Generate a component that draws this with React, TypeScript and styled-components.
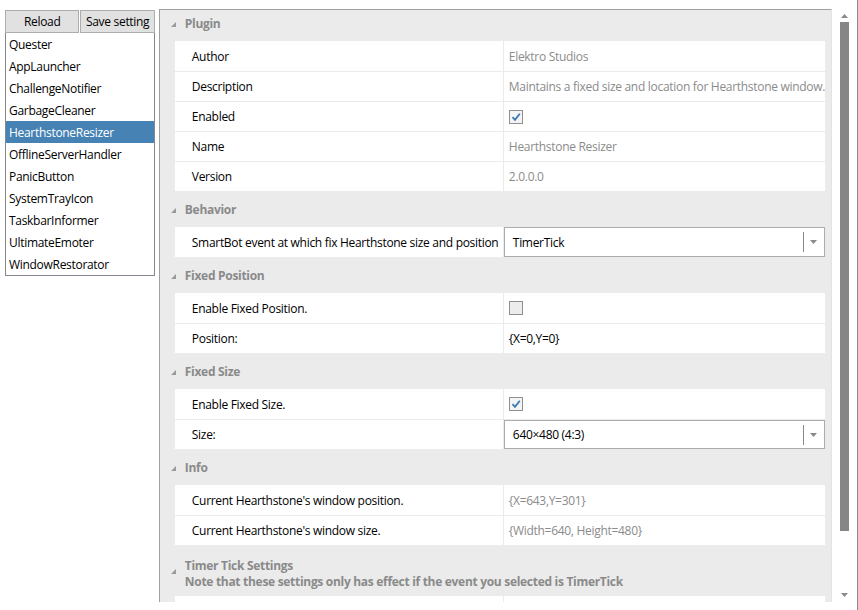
import styled, { createGlobalStyle } from "styled-components";

const GlobalStyle = createGlobalStyle`
  html, body {
    margin: 0;
    padding: 0;
    background: #ffffff;
  }
  body {
    font-family: "Open Sans", "Noto Sans", "Liberation Sans", sans-serif;
    font-size: 12px;
    letter-spacing: -0.3px;
    color: #000000;
  }
`;

const Window = styled.div`
  width: 858px;
  height: 610px;
  box-sizing: border-box;
  border-right: 1px solid #8a8a8a;
  display: flex;
  align-items: flex-start;
  padding: 9px 0 0 5px;
  gap: 4px;
`;

const Sidebar = styled.div`
  width: 150px;
  margin-top: 1px;
  display: flex;
  flex-direction: column;
`;

const ButtonBar = styled.div`
  display: flex;
`;

const Button = styled.button`
  flex: 1;
  height: 23px;
  margin: 0;
  padding: 0;
  font: inherit;
  letter-spacing: inherit;
  color: #000;
  background: #e1e1e1;
  border: 1px solid #adadad;
  & + & {
    margin-left: 1px;
  }
`;

const PluginList = styled.ul`
  list-style: none;
  margin: 0;
  padding: 0;
  border: 1px solid #828790;
  border-top: none;
  background: #fff;
`;

const PluginItem = styled.li<{ $selected?: boolean }>`
  height: 22px;
  line-height: 24px;
  padding-left: 3px;
  background: ${(p) => (p.$selected ? "#4682b4" : "transparent")};
  color: ${(p) => (p.$selected ? "#ffffff" : "#000000")};
`;

const GridFrame = styled.div`
  width: 672px;
  height: 592px;
  border-top: 1px solid #a0a0a0;
  border-left: 1px solid #a0a0a0;
  border-right: 1px solid #e4e4e4;
  background: #ebebeb;
  overflow: hidden;
`;

const Category = styled.section`
  padding-bottom: 5px;
`;

const CategoryHeader = styled.div`
  min-height: 31px;
  display: flex;
  align-items: center;
  gap: 9px;
  padding-left: 11px;
  color: #8a8a8a;
  font-weight: bold;
  line-height: 16px;
`;

const HeaderText = styled.div<{ $multi?: boolean }>`
  padding: ${(p) => (p.$multi ? "8px 0 6px" : "0 0 3px")};
`;

const Rows = styled.div`
  margin-left: 15px;
  width: 650px;
  background: #fff;
`;

const Row = styled.div`
  height: 30px;
  display: flex;
  box-sizing: border-box;
  & + & {
    border-top: 1px solid #ebebeb;
  }
`;

const NameCell = styled.div`
  width: 329px;
  border-right: 1px solid #ebebeb;
  padding-left: 17px;
  box-sizing: border-box;
  display: flex;
  align-items: center;
  white-space: nowrap;
`;

const ValueCell = styled.div<{ $readOnly?: boolean }>`
  flex: 1;
  display: flex;
  align-items: center;
  padding-left: 5px;
  color: ${(p) => (p.$readOnly ? "#8b8b8b" : "#000")};
  white-space: nowrap;
  overflow: hidden;
`;

const Combo = styled.div`
  flex: 1;
  align-self: stretch;
  margin-left: -5px;
  border: 1px solid #acacac;
  display: flex;
  align-items: center;
  padding-left: 8px;
`;

const ComboText = styled.span`
  flex: 1;
`;

const ComboButton = styled.div`
  width: 20px;
  height: 20px;
  border-left: 1px solid #8a8a8a;
  display: flex;
  align-items: center;
  justify-content: center;
`;

const Check = styled.div<{ $checked?: boolean }>`
  width: 14px;
  height: 14px;
  box-sizing: border-box;
  border: 1px solid #8f8f8f;
  background: ${(p) => (p.$checked ? "#f4f4f4" : "#ececec")};
  display: flex;
  align-items: center;
  justify-content: center;
`;

const ScrollTrack = styled.div`
  width: 25px;
  height: 592px;
  margin-left: -4px;
  display: flex;
  flex-direction: column;
  align-items: center;
`;

const ScrollArrow = styled.div`
  height: 13px;
  display: flex;
  align-items: center;
  justify-content: center;
`;

const ScrollThumb = styled.div`
  width: 9px;
  height: 509px;
  background: #868686;
`;

const ScrollSpace = styled.div`
  flex: 1;
`;

const Triangle = () => (
  <svg width="5" height="5" viewBox="0 0 5 5" style={{ marginTop: -3 }}>
    <polygon points="5,0 5,5 0,5" fill="#9a9a9a" />
  </svg>
);

const Chevron = ({ up }: { up?: boolean }) => (
  <svg width="7" height="4" viewBox="0 0 7 4">
    <polygon points={up ? "0,4 7,4 3.5,0" : "0,0 7,0 3.5,4"} fill="#8a8a8a" />
  </svg>
);

const Tick = () => (
  <svg width="10" height="10" viewBox="0 0 10 10">
    <path d="M1.5 5.2 L4 7.8 L8.8 1.8" stroke="#3a78b2" strokeWidth="1.8" fill="none" />
  </svg>
);

type Prop =
  | { name: string; value: string; readOnly?: boolean }
  | { name: string; check: boolean }
  | { name: string; combo: string };

const categories: { title: string[]; props: Prop[] }[] = [
  {
    title: ["Plugin"],
    props: [
      { name: "Author", value: "Elektro Studios", readOnly: true },
      {
        name: "Description",
        value: "Maintains a fixed size and location for Hearthstone window.",
        readOnly: true,
      },
      { name: "Enabled", check: true },
      { name: "Name", value: "Hearthstone Resizer", readOnly: true },
      { name: "Version", value: "2.0.0.0", readOnly: true },
    ],
  },
  {
    title: ["Behavior"],
    props: [
      {
        name: "SmartBot event at which fix Hearthstone size and position",
        combo: "TimerTick",
      },
    ],
  },
  {
    title: ["Fixed Position"],
    props: [
      { name: "Enable Fixed Position.", check: false },
      { name: "Position:", value: "{X=0,Y=0}" },
    ],
  },
  {
    title: ["Fixed Size"],
    props: [
      { name: "Enable Fixed Size.", check: true },
      { name: "Size:", combo: "640×480 (4:3)" },
    ],
  },
  {
    title: ["Info"],
    props: [
      { name: "Current Hearthstone's window position.", value: "{X=643,Y=301}", readOnly: true },
      {
        name: "Current Hearthstone's window size.",
        value: "{Width=640, Height=480}",
        readOnly: true,
      },
    ],
  },
  {
    title: [
      "Timer Tick Settings",
      "Note that these settings only has effect if the event you selected is TimerTick",
    ],
    props: [{ name: "", value: "" }],
  },
];

const plugins = [
  "Quester",
  "AppLauncher",
  "ChallengeNotifier",
  "GarbageCleaner",
  "HearthstoneResizer",
  "OfflineServerHandler",
  "PanicButton",
  "SystemTrayIcon",
  "TaskbarInformer",
  "UltimateEmoter",
  "WindowRestorator",
];

const renderValue = (p: Prop) => {
  if ("check" in p) {
    return (
      <ValueCell>
        <Check $checked={p.check}>{p.check && <Tick />}</Check>
      </ValueCell>
    );
  }
  if ("combo" in p) {
    return (
      <ValueCell>
        <Combo>
          <ComboText>{p.combo}</ComboText>
          <ComboButton>
            <Chevron />
          </ComboButton>
        </Combo>
      </ValueCell>
    );
  }
  return <ValueCell $readOnly={p.readOnly}>{p.value}</ValueCell>;
};

export default function App() {
  return (
    <>
      <GlobalStyle />
      <Window>
        <Sidebar>
          <ButtonBar>
            <Button>Reload</Button>
            <Button>Save setting</Button>
          </ButtonBar>
          <PluginList>
            {plugins.map((name) => (
              <PluginItem key={name} $selected={name === "HearthstoneResizer"}>
                {name}
              </PluginItem>
            ))}
          </PluginList>
        </Sidebar>
        <GridFrame>
          {categories.map((cat) => (
            <Category key={cat.title[0]}>
              <CategoryHeader>
                <Triangle />
                <HeaderText $multi={cat.title.length > 1}>
                  {cat.title.map((line) => (
                    <div key={line}>{line}</div>
                  ))}
                </HeaderText>
              </CategoryHeader>
              <Rows>
                {cat.props.map((p, i) => (
                  <Row key={i}>
                    <NameCell>{p.name}</NameCell>
                    {renderValue(p)}
                  </Row>
                ))}
              </Rows>
            </Category>
          ))}
        </GridFrame>
        <ScrollTrack>
          <ScrollArrow>
            <Chevron up />
          </ScrollArrow>
          <ScrollThumb />
          <ScrollSpace />
          <ScrollArrow>
            <Chevron />
          </ScrollArrow>
        </ScrollTrack>
      </Window>
    </>
  );
}
